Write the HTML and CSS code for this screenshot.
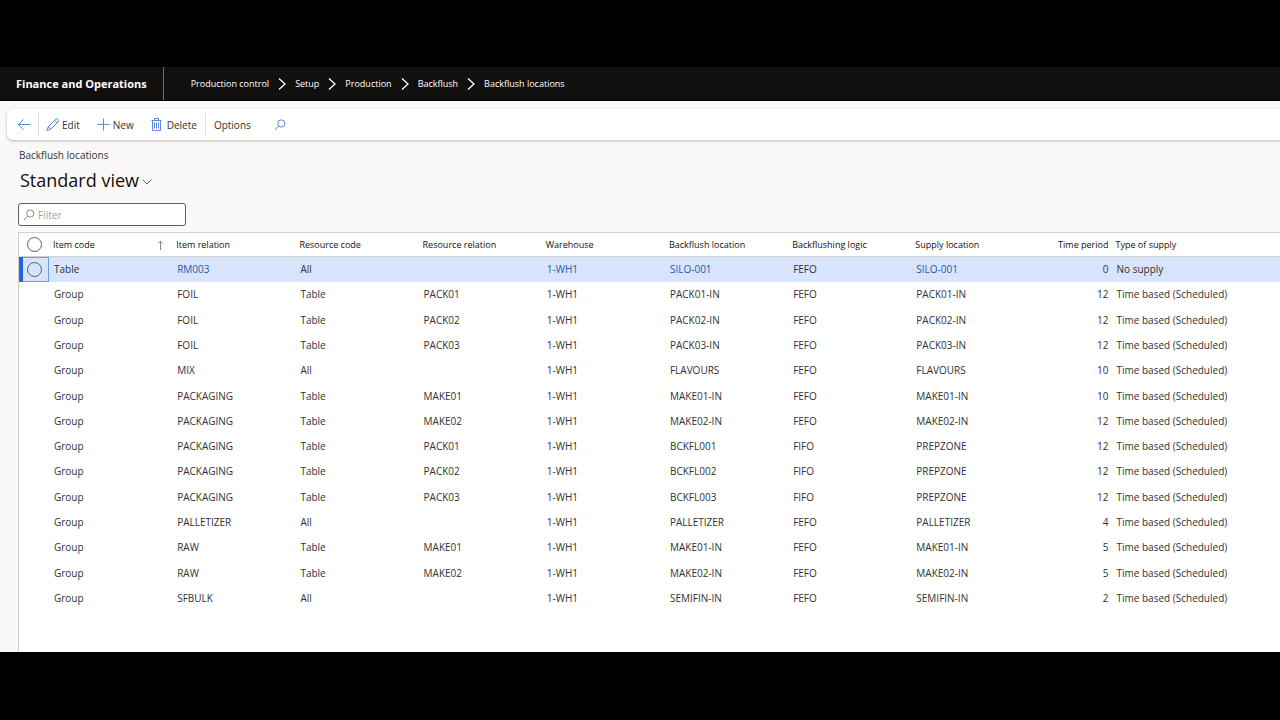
FILE: index.html
```html
<!doctype html>
<html lang="en">
<head>
	<meta charset="UTF-8">
	<title>Backflush locations</title>
	<link rel="stylesheet" href="styles.css">
</head>
<body>
	<header class="topbar">
		<div class="brand">Finance and Operations</div>
		<nav class="crumbs">
			<a href="#">Production control</a>
			<svg width="8" height="12" viewBox="0 0 8 12"><path d="M1 0.5L7 6L1 11.5"/></svg>
			<a href="#">Setup</a>
			<svg width="8" height="12" viewBox="0 0 8 12"><path d="M1 0.5L7 6L1 11.5"/></svg>
			<a href="#">Production</a>
			<svg width="8" height="12" viewBox="0 0 8 12"><path d="M1 0.5L7 6L1 11.5"/></svg>
			<a href="#">Backflush</a>
			<svg width="8" height="12" viewBox="0 0 8 12"><path d="M1 0.5L7 6L1 11.5"/></svg>
			<a href="#">Backflush locations</a>
		</nav>
	</header>
	<main>
		<div class="toolbar">
			<button class="back" type="button" aria-label="Back"><svg width="14" height="14" viewBox="0 0 14 14"><path d="M13 6.5H1.5M6.5 1.5L1.5 6.5L6.5 11.5"/></svg></button>
			<span class="sep"></span>
			<button class="edit" type="button"><svg width="14" height="14" viewBox="0 0 14 14"><path d="M1 12.5L2 9L9.7 1.3Q10.8 0.4 12 1.5Q13.1 2.7 12.2 3.8L4.5 11.5ZM2 9Q4 9.5 4.5 11.5M8.7 2.3L11.2 4.8"/></svg>Edit</button>
			<button class="new" type="button"><svg width="14" height="14" viewBox="0 0 14 14"><path d="M6.5 0.5V12.5M0.5 6.5H12.5"/></svg>New</button>
			<button class="delete" type="button"><svg width="12" height="14" viewBox="0 0 12 14"><path d="M0.5 2.5H10.5M3.5 2.5V0.5H7.5V2.5M1.5 2.5V12.5H9.5V2.5M3.5 4.5V10.5M5.5 4.5V10.5M7.5 4.5V10.5"/></svg>Delete</button>
			<span class="sep"></span>
			<button class="options" type="button">Options</button>
			<button class="search" type="button" aria-label="Search"><svg width="12" height="12" viewBox="0 0 12 12"><circle cx="7.3" cy="4.5" r="3.6"/><path d="M4.7 7.2L0.8 11"/></svg></button>
		</div>
		<section class="content">
			<div class="caption">Backflush locations</div>
			<button class="view" type="button">Standard view<svg width="10" height="6" viewBox="0 0 10 6"><path d="M0.7 0.7L5 5L9.3 0.7"/></svg></button>
			<label class="filter">
				<svg width="12" height="12" viewBox="0 0 12 12"><circle cx="7.3" cy="4.5" r="3.6"/><path d="M4.7 7.2L0.8 11"/></svg>
				<input type="text" placeholder="Filter" aria-label="Filter">
			</label>
			<div class="grid">
				<table>
					<colgroup>
						<col class="c-sel"><col class="c"><col class="c"><col class="c"><col class="c"><col class="c"><col class="c"><col class="c"><col class="c"><col class="c-time"><col>
					</colgroup>
					<thead>
						<tr>
							<th class="sel"><input type="radio" name="row" aria-label="Select all"></th>
							<th><div class="sorted">Item code<svg width="7" height="10" viewBox="0 0 7 10"><path d="M3.5 10V1M1 3.5L3.5 1L6 3.5"/></svg></div></th>
							<th>Item relation</th><th>Resource code</th><th>Resource relation</th><th>Warehouse</th><th>Backflush location</th><th>Backflushing logic</th><th>Supply location</th><th class="num">Time period</th><th>Type of supply</th>
						</tr>
					</thead>
					<tbody>
						<tr class="active"><td class="sel"><input type="radio" name="row" aria-label="Select row"></td><td>Table</td><td><a href="#">RM003</a></td><td>All</td><td></td><td><a href="#">1-WH1</a></td><td><a href="#">SILO-001</a></td><td>FEFO</td><td><a href="#">SILO-001</a></td><td class="num">0</td><td>No supply</td></tr>
						<tr><td></td><td>Group</td><td>FOIL</td><td>Table</td><td>PACK01</td><td>1-WH1</td><td>PACK01-IN</td><td>FEFO</td><td>PACK01-IN</td><td class="num">12</td><td>Time based (Scheduled)</td></tr>
						<tr><td></td><td>Group</td><td>FOIL</td><td>Table</td><td>PACK02</td><td>1-WH1</td><td>PACK02-IN</td><td>FEFO</td><td>PACK02-IN</td><td class="num">12</td><td>Time based (Scheduled)</td></tr>
						<tr><td></td><td>Group</td><td>FOIL</td><td>Table</td><td>PACK03</td><td>1-WH1</td><td>PACK03-IN</td><td>FEFO</td><td>PACK03-IN</td><td class="num">12</td><td>Time based (Scheduled)</td></tr>
						<tr><td></td><td>Group</td><td>MIX</td><td>All</td><td></td><td>1-WH1</td><td>FLAVOURS</td><td>FEFO</td><td>FLAVOURS</td><td class="num">10</td><td>Time based (Scheduled)</td></tr>
						<tr><td></td><td>Group</td><td>PACKAGING</td><td>Table</td><td>MAKE01</td><td>1-WH1</td><td>MAKE01-IN</td><td>FEFO</td><td>MAKE01-IN</td><td class="num">10</td><td>Time based (Scheduled)</td></tr>
						<tr><td></td><td>Group</td><td>PACKAGING</td><td>Table</td><td>MAKE02</td><td>1-WH1</td><td>MAKE02-IN</td><td>FEFO</td><td>MAKE02-IN</td><td class="num">12</td><td>Time based (Scheduled)</td></tr>
						<tr><td></td><td>Group</td><td>PACKAGING</td><td>Table</td><td>PACK01</td><td>1-WH1</td><td>BCKFL001</td><td>FIFO</td><td>PREPZONE</td><td class="num">12</td><td>Time based (Scheduled)</td></tr>
						<tr><td></td><td>Group</td><td>PACKAGING</td><td>Table</td><td>PACK02</td><td>1-WH1</td><td>BCKFL002</td><td>FIFO</td><td>PREPZONE</td><td class="num">12</td><td>Time based (Scheduled)</td></tr>
						<tr><td></td><td>Group</td><td>PACKAGING</td><td>Table</td><td>PACK03</td><td>1-WH1</td><td>BCKFL003</td><td>FIFO</td><td>PREPZONE</td><td class="num">12</td><td>Time based (Scheduled)</td></tr>
						<tr><td></td><td>Group</td><td>PALLETIZER</td><td>All</td><td></td><td>1-WH1</td><td>PALLETIZER</td><td>FEFO</td><td>PALLETIZER</td><td class="num">4</td><td>Time based (Scheduled)</td></tr>
						<tr><td></td><td>Group</td><td>RAW</td><td>Table</td><td>MAKE01</td><td>1-WH1</td><td>MAKE01-IN</td><td>FEFO</td><td>MAKE01-IN</td><td class="num">5</td><td>Time based (Scheduled)</td></tr>
						<tr><td></td><td>Group</td><td>RAW</td><td>Table</td><td>MAKE02</td><td>1-WH1</td><td>MAKE02-IN</td><td>FEFO</td><td>MAKE02-IN</td><td class="num">5</td><td>Time based (Scheduled)</td></tr>
						<tr><td></td><td>Group</td><td>SFBULK</td><td>All</td><td></td><td>1-WH1</td><td>SEMIFIN-IN</td><td>FEFO</td><td>SEMIFIN-IN</td><td class="num">2</td><td>Time based (Scheduled)</td></tr>
					</tbody>
				</table>
			</div>
		</section>
	</main>
</body>
</html>
```
FILE: styles.css
```css
*{box-sizing: border-box;}
body{margin: 0;padding: 67px 0 68px;min-height: 100vh;background: #000;display: flex;flex-direction: column;font-family: "Open Sans","Noto Sans",sans-serif;font-size: 10px;color: #323130;}
button,input{font: inherit;color: inherit;margin: 0;}
button{background: none;border: 0;padding: 0;display: flex;align-items: center;cursor: pointer;}
a{color: inherit;text-decoration: none;}
svg{fill: none;stroke: #5b8ae0;stroke-width: 1;flex: none;}

.topbar{height: 34px;background: #11100f;color: #fff;display: flex;align-items: center;border-bottom: 1px solid #000;}
.brand{font-size: 11px;font-weight: 700;height: 100%;display: flex;align-items: center;padding: 0 16px;border-right: 1px solid #6b6a69;}
.crumbs{display: flex;align-items: center;gap: 9px;padding-left: 27px;font-size: 9px;font-weight: 500;}
.crumbs svg{stroke: #fff;stroke-width: 1.3;}

main{flex: 1;background: #faf9f8;padding-top: 8px;display: flex;flex-direction: column;}
.toolbar{height: 31px;margin-left: 7px;background: #fff;border-radius: 6px 0 0 6px;box-shadow: 0 1px 3px rgba(0,0,0,0.28);display: flex;align-items: center;font-weight: 500;}
.sep{width: 1px;height: 23px;background: #e1dfdd;}
.back{padding: 0 7px 0 10px;}
.edit{padding-left: 7px;gap: 2px;}
.new{padding-left: 17px;gap: 2px;}
.delete{padding: 0 8px 0 17px;gap: 4px;}
.options{padding-left: 8px;}
.search{padding-left: 23px;}

.content{flex: 1;display: flex;flex-direction: column;align-items: flex-start;padding-left: 18px;}
.caption{margin-top: 8px;line-height: 14px;padding-left: 1px;}
.view{font-size: 18px;line-height: 24px;margin-top: 6px;padding-left: 2px;gap: 3px;color: #11100f;}
.view svg{stroke: #605e5c;margin-top: 4px;}
.filter{display: flex;align-items: center;gap: 3px;width: 168px;height: 23px;margin-top: 11px;padding: 0 4px;background: #fff;border: 1px solid #605e5c;border-radius: 3px;}
.filter svg{stroke: #8a8886;}
.filter input{flex: 1;min-width: 0;border: 0;padding: 0;outline: 0;background: none;}
.filter input::placeholder{color: #a19f9d;}

.grid{flex: 1;align-self: stretch;margin-top: 6px;background: #fff;border: 1px solid #d2d0ce;border-width: 1px 0 0 1px;}
table{width: 100%;height: 378px;table-layout: fixed;border-collapse: separate;border-spacing: 0;}
.c-sel{width: 30px;}
.c{width: 9.77%;}
.c-time{width: 77px;}
th,td{text-align: left;white-space: nowrap;padding: 0 0 0 5px;line-height: 15px;}
th{height: 24px;font-size: 9px;font-weight: 500;color: #11100f;padding-left: 4px;border-bottom: 1px solid #d2d0ce;}
.num{text-align: right;padding-right: 3px;}
.sorted{display: flex;justify-content: space-between;align-items: center;padding-right: 8px;}
.sorted svg{stroke: #8a8886;}
th.sel,td.sel{padding: 0;}
.sel input{appearance: none;width: 15px;height: 15px;border: 1px solid #605e5c;border-radius: 50%;display: block;margin: 0 auto;}
.active{background: #d8e4fb;}
.active .sel{box-shadow: inset 4px 0 #2266e3, inset 0 0 0 1px #6f9ae8;}
.active a{color: #2459b5;}
```
